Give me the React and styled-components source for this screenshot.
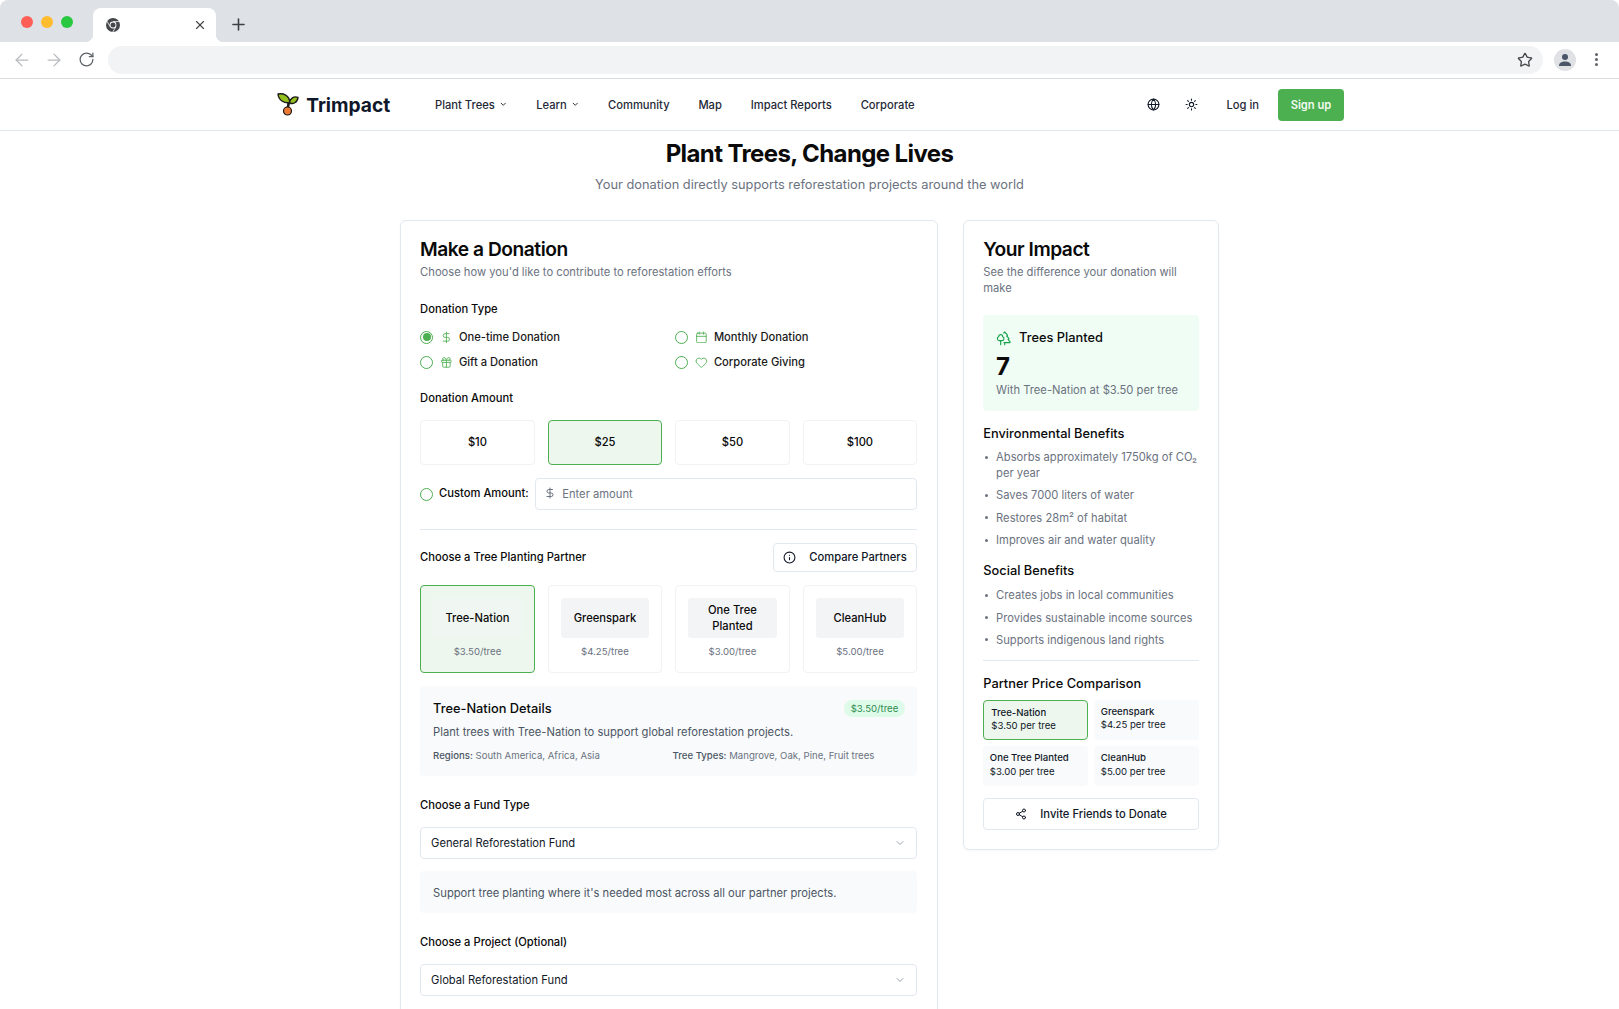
import React from 'react';
import styled, { createGlobalStyle } from 'styled-components';
import { ArrowLeft, ArrowRight, RotateCw, Star, X, Plus, Globe, Sun, ChevronDown, DollarSign, Calendar, Gift, Heart, Info, Share2, Trees } from 'lucide-react';

const Global = createGlobalStyle`
  * { box-sizing: border-box; }
  html, body { margin: 0; padding: 0; height: 100%; overflow: hidden; background: #fff; }
  body { font-family: Inter, "Liberation Sans", sans-serif; color: #0a0a0a; font-size: 11.2px; }
`;
const Frame = styled.div`height: 1009px; overflow: hidden; display: flex; flex-direction: column;`;
const TabBar = styled.div`height: 42px; background: #dee1e6; border-radius: 8px 8px 0 0; display: flex; align-items: flex-end; flex: none;`;
const Lights = styled.div`display: flex; gap: 8px; padding: 0 0 14.5px 21px; width: 93px;`;
const Light = styled.span`width: 12px; height: 12px; border-radius: 50%; background: ${p => p.$c};`;
const Tab = styled.div`position: relative; width: 123px; height: 34px; background: #fff; border-radius: 8px 8px 0 0; display: flex; align-items: center; justify-content: space-between; padding: 0 9px 0 13px; color: #45474a;
  &::before, &::after { content: ''; position: absolute; bottom: 0; width: 8px; height: 8px; }
  &::before { left: -8px; background: radial-gradient(circle at 0 0, #dee1e6 8px, #fff 8.5px); }
  &::after { right: -8px; background: radial-gradient(circle at 100% 0, #dee1e6 8px, #fff 8.5px); }`;
const NewTab = styled.div`margin: 0 0 8px 12.5px; color: #3c4043; display: flex;`;
const ToolBar = styled.div`height: 37px; flex: none; background: #fff; border-bottom: 1px solid #dadce0; display: flex; align-items: center; padding: 0 0 1px 12px;`;
const ToolIcon = styled.span`display: flex; justify-content: center; width: 20px; margin-right: ${p => p.$mr}px; color: ${p => p.$c};`;
const Address = styled.div`margin-left: 12px; width: 1435px; height: 28px; background: #f1f3f4; border-radius: 14px; display: flex; align-items: center; justify-content: flex-end; padding-right: 10px; color: #45474a;`;
const Avatar = styled.div`margin-left: 11px; width: 22px; height: 22px; border-radius: 50%; background: #dfe1e5; display: flex; align-items: center; justify-content: center;`;
const Dots = styled.div`margin-left: 19px; display: flex; flex-direction: column; gap: 2.2px;`;
const Dot = styled.span`width: 3.2px; height: 3.2px; border-radius: 50%; background: #5f6368;`;

const Nav = styled.nav`height: 52px; flex: none; border-bottom: 1px solid #e2e8f0; display: flex; align-items: center; justify-content: space-between; padding: 0 275px 0 277px;`;
const NavLeft = styled.div`display: flex; align-items: center;`;
const Brand = styled.div`display: flex; align-items: center; gap: 7.2px; width: 158px; font-size: 19.2px; font-weight: 700; color: #0f172a;`;
const Links = styled.div`display: flex; align-items: center; gap: 28.8px;`;
const NavLink = styled.span`display: flex; align-items: center; gap: 4px; font-weight: 500; font-size: 11.2px; color: #1f2937;`;
const NavRight = styled.div`display: flex; align-items: center; color: #111827;`;
const IconSlot = styled.span`display: flex; margin-right: ${p => p.$mr}px;`;
const SignUp = styled.span`width: 66px; height: 32px; margin-left: 19px; background: #4caf50; color: #f2faf2; font-weight: 600; font-size: 11.2px; border-radius: 4px; display: flex; align-items: center; justify-content: center;`;

const Main = styled.main`flex: 1; min-height: 0; display: flex; flex-direction: column; align-items: center;`;
const Title = styled.h1`margin: 7px 0 0; font-size: 24px; line-height: 32px; font-weight: 700; letter-spacing: -0.6px; color: #0a0a0a;`;
const Lead = styled.p`margin: 5px 0 0; font-size: 12.8px; line-height: 20px; color: #6b7280;`;
const Columns = styled.div`width: 819.2px; margin-top: 25px; display: grid; grid-template-columns: 537.6px 256px; gap: 25.6px; align-items: start;`;
const Card = styled.section`border: 1px solid #e2e8f0; border-radius: 6px; background: #fff; padding: 14px 19.2px ${p => p.$pb}px; box-shadow: 0 1px 2px rgba(0,0,0,.03);`;
const CardTitle = styled.h2`margin: 0; font-size: 19.2px; line-height: 28px; font-weight: 600; letter-spacing: -0.48px; color: #0a0a0a;`;
const CardSub = styled.p`margin: 1px 0 0; font-size: 11.2px; line-height: 16px; color: #6b7280;`;
const Label = styled.div`margin-top: ${p => p.$mt}px; font-size: 11.2px; line-height: 16px; font-weight: 500; color: #0a0a0a;`;

const TypeGrid = styled.div`margin-top: 10px; display: grid; grid-template-columns: 1fr 1fr; column-gap: 12.8px; row-gap: 5px;`;
const TypeItem = styled.div`height: 20px; display: flex; align-items: center; font-size: 11.2px; font-weight: 500; color: #1a1a1a;`;
const Radio = styled.span`width: 13px; height: 13px; flex: none; border: 1px solid #4caf50; border-radius: 50%; display: flex; align-items: center; justify-content: center;
  &::after { content: ''; width: 8px; height: 8px; border-radius: 50%; background: ${p => p.$on ? '#4caf50' : 'transparent'}; }`;
const TypeIcon = styled.span`display: flex; margin: 0 6px 0 7px; color: #4caf50;`;

const FourGrid = styled.div`display: grid; grid-template-columns: repeat(4, 1fr); gap: 12.8px; margin-top: ${p => p.$mt}px;`;
const Amount = styled.div`height: 45px; padding-bottom: 1px; display: flex; align-items: center; justify-content: center; font-size: 11.2px; font-weight: 500; border-radius: 4px; border: 1px solid ${p => p.$on ? '#4caf50' : '#f0f2f5'}; background: ${p => p.$on ? '#edf7ee' : '#fff'};`;
const CustomRow = styled.div`display: flex; align-items: center; margin-top: 13px;`;
const CustomLabel = styled.span`margin: -2px 6px 0; font-size: 11.2px; font-weight: 500;`;
const InputBox = styled.div`flex: 1; height: 32px; border: 1px solid #e2e8f0; border-radius: 4px; display: flex; align-items: center; padding-left: 8px; gap: 6.5px; color: #6b7280;`;
const InputIcon = styled.span`display: flex; margin-top: -2px;`;
const Input = styled.input`border: 0; outline: 0; flex: 1; padding: 0; font: inherit; font-size: 11.2px; &::placeholder { color: #6b7280; }`;
const Divider = styled.hr`border: 0; border-top: 1px solid #e2e8f0; margin: ${p => p.$m};`;
const PartnerHead = styled.div`display: flex; align-items: center; justify-content: space-between; margin-top: 13px;`;
const PartnerLabel = styled.span`font-size: 11.2px; font-weight: 500; margin-top: -2px;`;
const GhostBtn = styled.div`height: ${p => p.$h}px; border: 1px solid #e2e8f0; border-radius: 4px; display: flex; align-items: center; justify-content: center; gap: 13px; font-size: 11.2px; font-weight: 500; padding: 0 9.6px 1px; margin-top: ${p => p.$mt || 0}px; color: #111827;`;
const Partner = styled.div`height: 88px; border: 1px solid ${p => p.$on ? '#4caf50' : '#f0f2f5'}; border-radius: 4px; background: ${p => p.$on ? '#edf7ee' : '#fff'}; padding: 12px 12px 0; display: flex; flex-direction: column; align-items: center;`;
const PartnerLogo = styled.div`width: 100%; height: 40px; background: ${p => p.$on ? '#f0f6f1' : '#f3f4f6'}; border-radius: 3px; display: flex; align-items: center; justify-content: center; text-align: center; font-size: 11.2px; line-height: 16px; font-weight: 500;`;
const PartnerPrice = styled.div`margin-top: 7px; font-size: 9.6px; line-height: 14px; color: #6b7280;`;
const Panel = styled.div`margin-top: ${p => p.$mt}px; background: #f8fafc; border-radius: 4px; padding: ${p => p.$pad};`;
const PanelHead = styled.div`display: flex; align-items: center; justify-content: space-between;`;
const PanelTitle = styled.div`margin-top: 1px; font-size: 12.8px; font-weight: 500; line-height: 18px; color: #0a0a0a;`;
const Badge = styled.span`background: #dcfce7; color: #15803d; font-size: 9.6px; line-height: 17px; padding: 0 7px; border-radius: 9px; opacity: .9;`;
const PanelText = styled.p`margin: ${p => p.$m}; font-size: 11.2px; line-height: 16px; color: #4b5563;`;
const MetaRow = styled.div`display: grid; grid-template-columns: 239.5px 1fr; margin-top: 9px; font-size: 9.6px; line-height: 14px; color: #6b7280;`;
const Strong = styled.span`font-weight: 500; color: #4b5563;`;
const Select = styled.div`margin-top: ${p => p.$mt}px; height: 32px; border: 1px solid #e2e8f0; border-radius: 4px; padding: 0 10px; display: flex; align-items: center; justify-content: space-between; font-size: 11.2px; color: #111827;`;

const ImpactBox = styled.div`margin-top: 19px; height: 96px; border-radius: 4px; background: #f0fdf4; padding: 13px 12.8px;`;
const ImpactHead = styled.div`display: flex; align-items: center; gap: 7px; font-size: 12.8px; line-height: 20px; font-weight: 500; color: #0a0a0a;`;
const ImpactNum = styled.div`font-size: 24px; line-height: 32px; font-weight: 700; margin-top: 3px;`;
const ImpactNote = styled.div`font-size: 11.2px; line-height: 16px; color: #6b7280; margin-top: -1px;`;
const BenefitTitle = styled.div`margin-top: ${p => p.$mt}px; font-size: 12.8px; line-height: 18px; font-weight: 500;`;
const List = styled.ul`list-style: none; margin: ${p => p.$mt}px 0 0; padding: 0;`;
const Item = styled.li`position: relative; padding-left: 12.8px; margin-bottom: 6.4px; font-size: 11.2px; line-height: 16px; color: #6b7280;
  &::before { content: ''; position: absolute; left: 2px; top: 6.5px; width: 3px; height: 3px; border-radius: 50%; background: #6b7280; }`;
const PriceGrid = styled.div`margin-top: 7px; display: grid; grid-template-columns: 1fr 1fr; gap: 6.4px;`;
const PriceTile = styled.div`height: 40px; border-radius: 4px; padding: ${p => p.$on ? '5px 7px' : '5px 7px 0 6.5px'}; background: ${p => p.$on ? '#edf7ee' : '#f8fafc'}; border: ${p => p.$on ? '1px solid #4caf50' : '0'}; font-size: 9.6px; line-height: 13.5px; color: #111827;`;
const PriceName = styled.div`font-weight: 500;`;

const Logo = () => (
  <svg width="22" height="23" viewBox="0 0 22 23" style={{ flex: 'none' }}>
    <path d="M11.6 9 C11.6 12 11 14 10.5 16" stroke="#1b1b1b" strokeWidth="2.6" fill="none" />
    <path d="M1 1 C6 0 12.5 2 12.8 9.6 C7 10.2 1.5 7.5 1 1Z" fill="#95c11f" stroke="#1b1b1b" strokeWidth="1.4" strokeLinejoin="round" />
    <path d="M21 4.4 C17 2.8 12.8 5.2 12.4 10 C16 11.4 20.4 9.8 21 4.4Z" fill="#95c11f" stroke="#1b1b1b" strokeWidth="1.4" strokeLinejoin="round" />
    <circle cx="10.5" cy="18" r="4" fill="#ec7a35" stroke="#1b1b1b" strokeWidth="1.2" />
  </svg>
);
const ChromeMark = () => (
  <svg width="14" height="14" viewBox="0 0 14 14">
    <circle cx="7" cy="7" r="7" fill="#45474a" />
    <circle cx="7" cy="7" r="3.4" fill="#fff" />
    <circle cx="7" cy="7" r="2.5" fill="#45474a" />
    <path d="M7 3.6 H13.2 M4.1 8.7 L1 3.2 M9.9 8.7 L6.8 14" stroke="#fff" strokeWidth=".8" />
  </svg>
);
const Person = () => (
  <svg width="14" height="14" viewBox="0 0 14 14" fill="#4a5568">
    <circle cx="7" cy="4" r="3" />
    <path d="M1 13 C1 9.5 4 8.5 7 8.5 C10 8.5 13 9.5 13 13Z" />
  </svg>
);

const partners = [['Tree-Nation', '$3.50/tree', true], ['Greenspark', '$4.25/tree'], ['One Tree Planted', '$3.00/tree'], ['CleanHub', '$5.00/tree']];
const tiles = [['Tree-Nation', '$3.50 per tree', true], ['Greenspark', '$4.25 per tree'], ['One Tree Planted', '$3.00 per tree'], ['CleanHub', '$5.00 per tree']];

export default function App() {
  return (
    <Frame>
      <Global />
      <TabBar>
        <Lights>
          <Light $c="#ff5f57" /><Light $c="#febc2e" /><Light $c="#28c840" />
        </Lights>
        <Tab><ChromeMark /><X size={14} strokeWidth={2} /></Tab>
        <NewTab><Plus size={19} strokeWidth={2} /></NewTab>
      </TabBar>
      <ToolBar>
        <ToolIcon $mr={12} $c="#b8babd"><ArrowLeft size={20} strokeWidth={1.5} /></ToolIcon>
        <ToolIcon $mr={12} $c="#b8babd"><ArrowRight size={20} strokeWidth={1.5} /></ToolIcon>
        <ToolIcon $mr={0} $c="#5f6368"><RotateCw size={17} strokeWidth={1.8} /></ToolIcon>
        <Address><Star size={16} /></Address>
        <Avatar><Person /></Avatar>
        <Dots><Dot /><Dot /><Dot /></Dots>
      </ToolBar>
      <Nav>
        <NavLeft>
          <Brand><Logo />Trimpact</Brand>
          <Links>
            <NavLink>Plant Trees <ChevronDown size={8.5} strokeWidth={2.6} /></NavLink>
            <NavLink>Learn <ChevronDown size={8.5} strokeWidth={2.6} /></NavLink>
            <NavLink>Community</NavLink>
            <NavLink>Map</NavLink>
            <NavLink>Impact Reports</NavLink>
            <NavLink>Corporate</NavLink>
          </Links>
        </NavLeft>
        <NavRight>
          <IconSlot $mr={25}><Globe size={13} /></IconSlot>
          <IconSlot $mr={28}><Sun size={13} /></IconSlot>
          <NavLink>Log in</NavLink>
          <SignUp>Sign up</SignUp>
        </NavRight>
      </Nav>
      <Main>
        <Title>Plant Trees, Change Lives</Title>
        <Lead>Your donation directly supports reforestation projects around the world</Lead>
        <Columns>
          <Card $pb={40}>
            <CardTitle>Make a Donation</CardTitle>
            <CardSub>Choose how you'd like to contribute to reforestation efforts</CardSub>
            <Label $mt={21}>Donation Type</Label>
            <TypeGrid>
              <TypeItem><Radio $on /><TypeIcon><DollarSign size={12.8} strokeWidth={1.6} /></TypeIcon>One-time Donation</TypeItem>
              <TypeItem><Radio /><TypeIcon><Calendar size={12.8} strokeWidth={1.6} /></TypeIcon>Monthly Donation</TypeItem>
              <TypeItem><Radio /><TypeIcon><Gift size={12.8} strokeWidth={1.6} /></TypeIcon>Gift a Donation</TypeItem>
              <TypeItem><Radio /><TypeIcon><Heart size={12.8} strokeWidth={1.6} /></TypeIcon>Corporate Giving</TypeItem>
            </TypeGrid>
            <Label $mt={18}>Donation Amount</Label>
            <FourGrid $mt={14}>
              <Amount>$10</Amount>
              <Amount $on>$25</Amount>
              <Amount>$50</Amount>
              <Amount>$100</Amount>
            </FourGrid>
            <CustomRow>
              <Radio />
              <CustomLabel>Custom Amount:</CustomLabel>
              <InputBox>
                <InputIcon><DollarSign size={12} /></InputIcon>
                <Input placeholder="Enter amount" />
              </InputBox>
            </CustomRow>
            <Divider $m="19px 0 0" />
            <PartnerHead>
              <PartnerLabel>Choose a Tree Planting Partner</PartnerLabel>
              <GhostBtn $h={29}><Info size={13} />Compare Partners</GhostBtn>
            </PartnerHead>
            <FourGrid $mt={13}>
              {partners.map(([name, price, on]) => (
                <Partner key={name} $on={on}>
                  <PartnerLogo $on={on}>{name}</PartnerLogo>
                  <PartnerPrice>{price}</PartnerPrice>
                </Partner>
              ))}
            </FourGrid>
            <Panel $mt={13} $pad="13px 12px 13px 13px">
              <PanelHead>
                <PanelTitle>Tree-Nation Details</PanelTitle>
                <Badge>$3.50/tree</Badge>
              </PanelHead>
              <PanelText $m="6px 0 0">Plant trees with Tree-Nation to support global reforestation projects.</PanelText>
              <MetaRow>
                <span><Strong>Regions:</Strong> South America, Africa, Asia</span>
                <span><Strong>Tree Types:</Strong> Mangrove, Oak, Pine, Fruit trees</span>
              </MetaRow>
            </Panel>
            <Label $mt={21}>Choose a Fund Type</Label>
            <Select $mt={14}>General Reforestation Fund <ChevronDown size={12} color="#9ca3af" /></Select>
            <Panel $mt={12} $pad="13.5px 13px 12.5px">
              <PanelText $m="0">Support tree planting where it's needed most across all our partner projects.</PanelText>
            </Panel>
            <Label $mt={21}>Choose a Project (Optional)</Label>
            <Select $mt={14}>Global Reforestation Fund <ChevronDown size={12} color="#9ca3af" /></Select>
          </Card>
          <Card $pb={19}>
            <CardTitle>Your Impact</CardTitle>
            <CardSub>See the difference your donation will make</CardSub>
            <ImpactBox>
              <ImpactHead><Trees size={16} color="#16a34a" strokeWidth={1.7} />Trees Planted</ImpactHead>
              <ImpactNum>7</ImpactNum>
              <ImpactNote>With Tree-Nation at $3.50 per tree</ImpactNote>
            </ImpactBox>
            <BenefitTitle $mt={14}>Environmental Benefits</BenefitTitle>
            <List $mt={6}>
              <Item>Absorbs approximately 1750kg of CO₂ per year</Item>
              <Item>Saves 7000 liters of water</Item>
              <Item>Restores 28m² of habitat</Item>
              <Item>Improves air and water quality</Item>
            </List>
            <BenefitTitle $mt={14}>Social Benefits</BenefitTitle>
            <List $mt={7}>
              <Item>Creates jobs in local communities</Item>
              <Item>Provides sustainable income sources</Item>
              <Item>Supports indigenous land rights</Item>
            </List>
            <Divider $m="12px 0 0" />
            <BenefitTitle $mt={14}>Partner Price Comparison</BenefitTitle>
            <PriceGrid>
              {tiles.map(([name, price, on]) => (
                <PriceTile key={name} $on={on}>
                  <PriceName>{name}</PriceName>
                  {price}
                </PriceTile>
              ))}
            </PriceGrid>
            <GhostBtn $h={32} $mt={12}><Share2 size={12} />Invite Friends to Donate</GhostBtn>
          </Card>
        </Columns>
      </Main>
    </Frame>
  );
}
